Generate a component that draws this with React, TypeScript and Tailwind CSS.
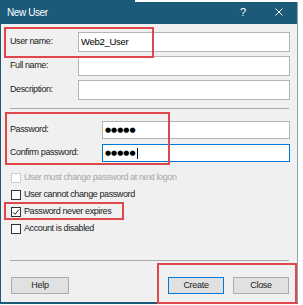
import React from 'react';

const font = { fontFamily: '"Liberation Sans", Arial, sans-serif' };

const Field = ({ value, focused, password }: { value?: string; focused?: boolean; password?: boolean }) => (
  <div
    className={`flex-1 self-stretch flex items-center bg-white border pl-[2px] ${focused ? 'border-[#0078d7]' : 'border-[#b4b4b4]'}`}
  >
    {password ? (
      <span className="flex items-center">
        <span className="text-[7px] leading-none text-black" style={{ fontFamily: '"DejaVu Sans", sans-serif' }}>
          ●●●●●
        </span>
        {focused && <span className="ml-[1px] w-px h-[11px] bg-black" />}
      </span>
    ) : (
      <span className="text-[9.5px] tracking-[-0.3px] text-black">{value}</span>
    )}
  </div>
);

const Check = ({ label, checked, disabled }: { label: string; checked?: boolean; disabled?: boolean }) => (
  <div className="h-[17px] flex items-center gap-[3px]">
    <div
      className={`w-[10px] h-[10px] border flex items-center justify-center bg-white ${disabled ? 'border-[#cccccc]' : 'border-[#333333]'}`}
    >
      {checked && (
        <svg width="8" height="8" viewBox="0 0 8 8">
          <path d="M1 4.2 L3 6.3 L7 1.5" fill="none" stroke="#222" strokeWidth="1" />
        </svg>
      )}
    </div>
    <span className={`text-[9px] tracking-[-0.4px] ${disabled ? 'text-[#a6a6a6]' : 'text-[#1a1a1a]'}`}>{label}</span>
  </div>
);

const Btn = ({ label, primary, w }: { label: string; primary?: boolean; w: string }) => (
  <div
    className={`${w} h-[17px] flex items-center justify-center bg-[#e1e1e1] border text-[9px] tracking-[-0.3px] text-[#1a1a1a] ${primary ? 'border-[#0078d7]' : 'border-[#adadad]'}`}
  >
    {label}
  </div>
);

export default function App() {
  return (
    <div className="relative w-[303px] h-[305px] bg-white overflow-hidden" style={font}>
      <div className="w-[298px] h-[304px] flex flex-col bg-[#f0f0f0] border-l border-r border-b-2 border-l-[#1c5a7a] border-r-[#8aa6b8] border-b-[#1c5a7a]">
        {/* title bar */}
        <div className="h-[24px] shrink-0 bg-[#1c5a7a] flex items-center pl-[6px] pr-[14px] text-white">
          <span className="text-[10px] tracking-[-0.4px]">New User</span>
          <span className="ml-auto text-[11px] mr-[29px]">?</span>
          <svg width="8" height="8" viewBox="0 0 8 8">
            <path d="M0.5 0.5 L7.5 7.5 M7.5 0.5 L0.5 7.5" stroke="white" strokeWidth="1" />
          </svg>
        </div>

        <div className="flex-1 flex flex-col pl-[9px] pr-[7px]">
          <div className="mt-[8px] flex flex-col gap-[4px]">
            {[
              ['User name:', 'Web2_User'],
              ['Full name:', ''],
              ['Description:', ''],
            ].map(([l, v]) => (
              <div key={l} className="h-[20px] flex items-center">
                <span className="w-[68px] text-[9px] tracking-[-0.4px] text-[#1a1a1a]">{l}</span>
                <Field value={v} />
              </div>
            ))}
          </div>

          <div className="mt-[8px] h-px bg-[#a9a9a9] mr-[1px]" />

          <div className="mt-[12px] flex flex-col gap-[5px]">
            <div className="h-[18px] flex items-center">
              <span className="w-[92px] text-[9px] tracking-[-0.4px] text-[#1a1a1a]">Password:</span>
              <Field password />
            </div>
            <div className="h-[18px] flex items-center">
              <span className="w-[92px] text-[9px] tracking-[-0.4px] text-[#1a1a1a]">Confirm password:</span>
              <Field password focused />
            </div>
          </div>

          <div className="mt-[7px] flex flex-col pl-[1px]">
            <Check label="User must change password at next logon" disabled />
            <Check label="User cannot change password" />
            <Check label="Password never expires" checked />
            <Check label="Account is disabled" />
          </div>

          <div className="mt-[23px] h-px bg-[#a9a9a9] mr-[1px]" />

          <div className="mt-[16px] flex items-center pl-[1px] pr-[1px]">
            <Btn label="Help" w="w-[58px]" />
            <div className="ml-auto flex gap-[9px]">
              <Btn label="Create" primary w="w-[56px]" />
              <Btn label="Close" w="w-[56px]" />
            </div>
          </div>
        </div>
      </div>

      {/* strip of the window behind */}
      <div className="absolute left-[135px] top-0 w-[163px] h-[2px] bg-white" />

      {/* red annotation boxes */}
      <div className="absolute left-[4px] top-[27px] w-[150px] h-[31px] border-2 border-[#e0474c]" />
      <div className="absolute left-[5px] top-[112px] w-[165px] h-[53px] border-2 border-[#e0474c]" />
      <div className="absolute left-[4px] top-[202px] w-[120px] h-[18px] border-2 border-[#e0474c]" />
      <div className="absolute left-[157px] top-[263px] w-[140px] h-[41px] border-2 border-[#e0474c]" />
    </div>
  );
}
